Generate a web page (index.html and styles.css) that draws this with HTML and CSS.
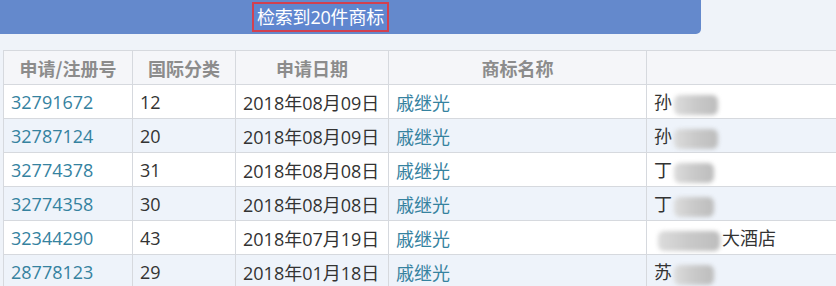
FILE: index.html
```html
<!DOCTYPE html>
<html lang="zh-CN">
<head>
<meta charset="utf-8">
<link rel="stylesheet" href="styles.css">
</head>
<body>
<div class="topbar">
  <span class="result-title">检索到20件商标</span>
</div>
<div class="table-wrap">
<table class="tm-table">
  <colgroup>
    <col class="c1"><col class="c2"><col class="c3"><col class="c4"><col class="c5">
  </colgroup>
  <thead>
    <tr><th>申请/注册号</th><th>国际分类</th><th>申请日期</th><th>商标名称</th><th></th></tr>
  </thead>
  <tbody>
    <tr><td class="link">32791672</td><td>12</td><td>2018年08月09日</td><td class="link">戚继光</td><td>孙<span class="blur w1"></span></td></tr>
    <tr class="alt"><td class="link">32787124</td><td>20</td><td>2018年08月09日</td><td class="link">戚继光</td><td>孙<span class="blur w1"></span></td></tr>
    <tr><td class="link">32774378</td><td>31</td><td>2018年08月08日</td><td class="link">戚继光</td><td>丁<span class="blur w2"></span></td></tr>
    <tr class="alt"><td class="link">32774358</td><td>30</td><td>2018年08月08日</td><td class="link">戚继光</td><td>丁<span class="blur w2"></span></td></tr>
    <tr><td class="link">32344290</td><td>43</td><td>2018年07月19日</td><td class="link">戚继光</td><td><span class="blur w3"></span>大酒店</td></tr>
    <tr class="alt"><td class="link">28778123</td><td>29</td><td>2018年01月18日</td><td class="link">戚继光</td><td>苏<span class="blur w2"></span></td></tr>
  </tbody>
</table>
</div>
</body>
</html>
```
FILE: styles.css
```css
html, body {
  margin: 0;
  padding: 0;
}
body {
  background: #eff3f9;
  font-family: "Open Sans", "Noto Sans CJK SC", sans-serif;
  font-size: 18px;
  color: #333;
  width: 836px;
  height: 286px;
  overflow: hidden;
}
.topbar {
  width: 701px;
  height: 34px;
  background: #6489cc;
  border-bottom-right-radius: 5px;
  display: flex;
  align-items: center;
  padding-left: 252px;
  box-sizing: border-box;
}
.result-title {
  display: inline-flex;
  align-items: center;
  height: 26px;
  padding: 0 3px;
  border: 2px solid #d2404f;
  color: #fff;
  background: #5f86cf;
  line-height: 26px;
  letter-spacing: -0.2px;
}
.table-wrap {
  margin-top: 16px;
  margin-left: 3px;
}
.tm-table {
  border-collapse: collapse;
  table-layout: fixed;
  width: 833px;
}
.c1 { width: 129px; }
.c2 { width: 103px; }
.c3 { width: 153px; }
.c4 { width: 258px; }
.c5 { width: 190px; }
.tm-table th,
.tm-table td {
  border: 1px solid #d6d9de;
  height: 34px;
  padding: 0 7px;
  box-sizing: border-box;
  white-space: nowrap;
  overflow: hidden;
}
.tm-table th {
  background: #f5f6f9;
  color: #8c8c8c;
  font-weight: bold;
  text-align: center;
  font-family: "Noto Sans CJK SC", sans-serif;
}
.tm-table td {
  background: #ffffff;
  text-align: left;
}
.tm-table tr.alt td {
  background: #eef3fa;
}
.tm-table td.link {
  color: #35829f;
}
.blur {
  display: inline-block;
  height: 20px;
  vertical-align: middle;
  background: linear-gradient(90deg, #dcdcdc, #c9c9c9 50%, #bdbdbd);
  border-radius: 6px;
  filter: blur(2px);
  margin-left: 2px;
}
.w1 { width: 44px; }
.w2 { width: 40px; }
.w3 { width: 62px; margin-left: 4px; margin-right: 2px; }
```
